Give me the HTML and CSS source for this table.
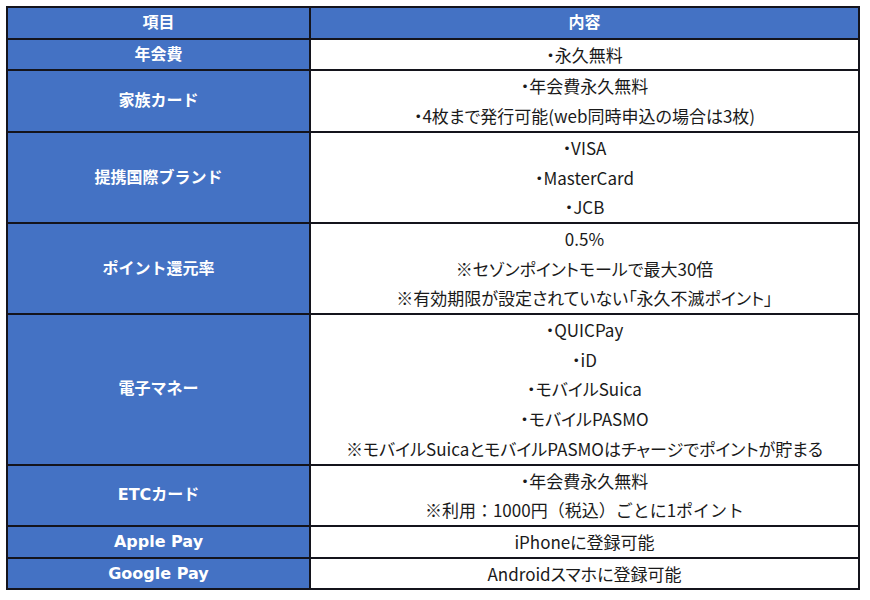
FILE: index.html
```html
<!DOCTYPE html>
<html lang="ja">
<head>
<meta charset="utf-8">
<link rel="stylesheet" href="styles.css">
</head>
<body>
<div class="wrap">
<table class="spec">
  <thead>
    <tr><th class="k">項目</th><th class="k">内容</th></tr>
  </thead>
  <tbody>
    <tr><th class="k">年会費</th><td><div class="ln">・永久無料</div></td></tr>
    <tr><th class="k">家族カード</th><td><div class="ln">・年会費永久無料</div><div class="ln">・4枚まで発行可能(web同時申込の場合は3枚)</div></td></tr>
    <tr><th class="k">提携国際ブランド</th><td><div class="ln">・VISA</div><div class="ln">・MasterCard</div><div class="ln">・JCB</div></td></tr>
    <tr><th class="k">ポイント還元率</th><td><div class="ln">0.5%</div><div class="ln">※セゾンポイントモールで最大30倍</div><div class="ln">※有効期限が設定されていない「永久不滅ポイント」</div></td></tr>
    <tr><th class="k">電子マネー</th><td><div class="ln">・QUICPay</div><div class="ln">・iD</div><div class="ln">・モバイルSuica</div><div class="ln">・モバイルPASMO</div><div class="ln">※モバイルSuicaとモバイルPASMOはチャージでポイントが貯まる</div></td></tr>
    <tr><th class="k">ETCカード</th><td><div class="ln">・年会費永久無料</div><div class="ln fw">※利用：1000円（税込）ごとに1ポイント</div></td></tr>
    <tr><th class="k">Apple Pay</th><td><div class="ln">iPhoneに登録可能</div></td></tr>
    <tr><th class="k">Google Pay</th><td><div class="ln">Androidスマホに登録可能</div></td></tr>
  </tbody>
</table>
</div>
</body>
</html>
```

FILE: styles.css
```css
html, body {
  margin: 0;
  padding: 0;
  background: #ffffff;
}
.wrap {
  padding: 6px 0 0 6px;
}
.spec {
  border-collapse: collapse;
  width: 854px;
  table-layout: fixed;
}
.spec th, .spec td {
  border: 2px solid #14141c;
  padding: 0;
  text-align: center;
  vertical-align: middle;
}
.spec th.k {
  background: #4472c4;
  color: #ffffff;
  font-family: "DejaVu Sans", "Noto Sans CJK JP", sans-serif;
  font-size: 16px;
  font-weight: 700;
  line-height: 29.7px;
}
.spec thead th.k:first-child {
  width: 301px;
}
.spec td {
  color: #1a1a1a;
  background: #ffffff;
  font-family: "Noto Sans CJK JP", sans-serif;
  font-size: 17px;
  font-feature-settings: "palt";
}
.ln {
  line-height: 29.7px;
  white-space: nowrap;
}
.ln.fw {
  font-feature-settings: normal;
}
```
